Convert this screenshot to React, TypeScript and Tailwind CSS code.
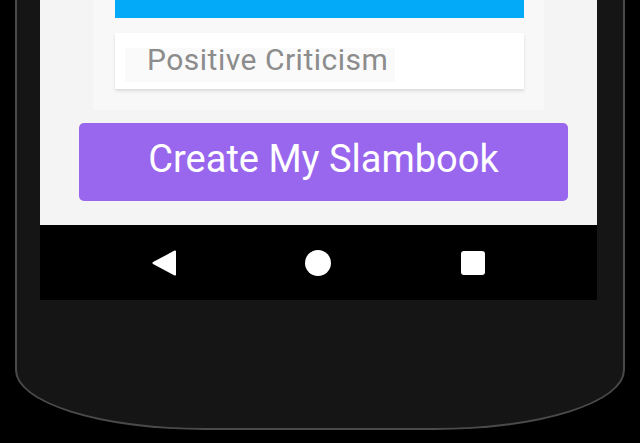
export default function App() {
  return (
    <div className="w-[640px] h-[443px] bg-black overflow-hidden" style={{ fontFamily: "Roboto, 'Noto Sans', sans-serif" }}>
      <div className="ml-[15px] w-[610px] h-[430px] bg-[#151515] border-2 border-t-0 border-[#4a4a4a] rounded-bl-[190px_60px] rounded-br-[190px_60px] pl-[23px] pr-[26px]">
        {/* screen */}
        <div className="h-[225px] bg-[#f4f4f4] flex flex-col">
          <div className="mx-[53px] h-[110px] bg-[#f8f8f8] pl-[22px]">
            <div className="w-[409px] h-[18px] bg-[#03aaf8]" />
            <div className="mt-[15px] w-[409px] h-[56px] bg-white shadow-[0_2px_3px_rgba(0,0,0,0.12)] px-[10px] py-[15px]">
              <div className="w-[270px] h-[34px] bg-[#fafafa] flex items-center">
                <span className="ml-[22px] text-[30px] leading-none text-[#8c8c8c] -mt-[10px] tracking-[0.5px]">Positive Criticism</span>
              </div>
            </div>
          </div>
          <button className="mt-[13px] ml-[39px] w-[489px] h-[78px] rounded-[5px] bg-[#9966ee] text-white text-[38px] leading-none flex items-center justify-center pb-[6px]">
            Create My Slambook
          </button>
        </div>
        {/* nav bar */}
        <div className="h-[75px] bg-black flex items-center">
          <svg className="ml-[112px]" width="24" height="26" viewBox="0 0 24 26">
            <path d="M23 1.5 L1.5 13 L23 24.5 Z" fill="#fff" stroke="#fff" strokeWidth="2" strokeLinejoin="round" />
          </svg>
          <div className="ml-[129px] w-[26px] h-[26px] rounded-full bg-white" />
          <div className="ml-[130px] w-[24px] h-[24px] rounded-[3px] bg-white" />
        </div>
      </div>
    </div>
  );
}
